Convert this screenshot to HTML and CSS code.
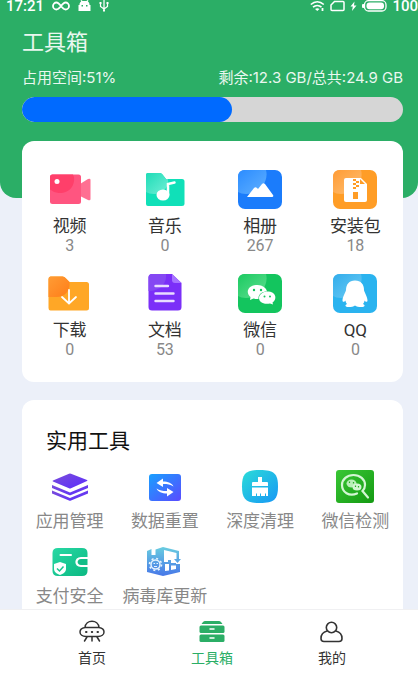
FILE: index.html
```html
<!DOCTYPE html>
<html lang="zh-CN">
<head>
    <meta charset="UTF-8">
    <meta name="viewport" content="width=device-width, initial-scale=1.0">
    <title>工具箱</title>
    <link rel="stylesheet" href="styles.css">
</head>
<body>
    <div class="app">
        <main class="content">
            <header class="header">
                <div class="status-bar">
                    <div class="status-left">
                        <span>17:21</span>
                        <svg width="18" height="12" viewBox="0 0 18 12" fill="none" stroke="#fff" stroke-width="1.8">
                            <path d="M9 6C7 3.500 6 2.500 4.500 2.500a3.500 3.500 0 0 0 0 7C6 9.500 7 8.500 9 6s3-3.500 4.500-3.500a3.500 3.500 0 0 1 0 7C12 9.500 11 8.500 9 6z"/>
                        </svg>
                        <svg width="13" height="12" viewBox="0 0 13 12" fill="#fff">
                            <path fill-rule="evenodd" d="M1.500 4.500c0-1.500.7-2.500 1.700-3L2.500.500 3.500 0l1 1h4l1-1 1 .5-.7 1c1 .5 1.700 1.500 1.700 3v.5h1v6H.5V5h1zM3.500 5v1.500H5V5zM8 5v1.500h1.500V5z"/>
                        </svg>
                        <svg width="10" height="12" viewBox="0 0 10 12" fill="none" stroke="#fff" stroke-width="1.200">
                            <path d="M5 0v11M1.500 3.500v3L5 9l3.500-2.500v-3"/>
                            <path d="M.5 3h2M7.500 3h2M4 10.500h2" stroke-width="2"/>
                        </svg>
                    </div>
                    <div class="status-right">
                        <svg width="15" height="12" viewBox="0 0 15 12" fill="none" stroke="#fff" stroke-width="1.600">
                            <path d="M.8 4.500c4-3.500 9-3.500 13 0M3 7.200c2.500-2.200 6-2.200 8.500 0"/>
                            <path d="M5 9c1.500-1 3-1 4.500 0l-2.200 2z" fill="#fff" stroke="none"/>
                            <path d="M12.500 8v3" stroke-width="1.800"/>
                        </svg>
                        <svg width="15" height="12" viewBox="0 0 15 12" fill="none" stroke="#fff" stroke-width="1.500">
                            <path d="M4.500 1.500H13q1 0 1 1v7q0 1-1 1H2q-1 0-1-1V5z"/>
                        </svg>
                        <svg width="7" height="12" viewBox="0 0 7 12" fill="#fff">
                            <path d="M4.500 1.500L.5 6.500h2.300L2 11l4.500-5.500H4z"/>
                        </svg>
                        <svg width="25" height="12" viewBox="0 0 25 12">
                            <rect x="2.500" y=".7" width="21.500" height="10.300" rx="4" fill="none" stroke="#fff" stroke-width="1.300"/>
                            <rect x="4.500" y="2.500" width="17.500" height="6.700" rx="3" fill="#fff"/>
                            <rect x="0" y="4" width="2.500" height="4" rx="1" fill="#fff"/>
                        </svg>
                        <span>100</span>
                    </div>
                </div>
                <h1 class="page-title">工具箱</h1>
                <div class="storage-text">
                    <span>占用空间:51%</span>
                    <span>剩余:12.3 GB/总共:24.9 GB</span>
                </div>
                <div class="storage-bar">
                    <div class="storage-used" style="width: 55%"></div>
                </div>
            </header>

            <section class="card files">
                <a class="item" href="#">
                    <svg width="44" height="40" viewBox="0 0 44 40">
                        <path d="M32 15l8-5q2.500-1 2.500 1v19q0 2-2.500 1l-8-4z" fill="#ff6f92"/>
                        <rect x="2" y="5.500" width="31" height="29.500" rx="2.500" fill="#ff5580"/>
                        <path d="M4.500 5.500h20.500q2 4 .5 9c-2 7-9 10-15 9.500q-5-.5-8.500-3.500V8q0-2.500 2.500-2.500z" fill="#ff3f6a"/>
                        <circle cx="9" cy="12.500" r="2.500" fill="#fff"/>
                    </svg>
                    <span class="item-name">视频</span>
                    <span class="item-count">3</span>
                </a>
                <a class="item" href="#">
                    <svg width="44" height="40" viewBox="0 0 44 40">
                        <defs>
                            <linearGradient id="musicShine" x1="0" y1="0" x2="1" y2="1">
                                <stop offset="0" stop-color="#1fdcb7"/>
                                <stop offset="1" stop-color="#70efd6"/>
                            </linearGradient>
                        </defs>
                        <path d="M5 4h12q1.500 0 2.500 1.500L23 10h16q2.500 0 2.500 2.500V35q0 2-2.500 2H5q-2 0-2-2V6q0-2 2-2z" fill="#10e0b8"/>
                        <path d="M5 4h12q1.500 0 2.500 1.500L23 10h2c1 7-4 15-14 15q-5 0-8-2V6q0-2 2-2z" fill="url(#musicShine)"/>
                        <ellipse cx="20" cy="26" rx="6.500" ry="5.500" fill="#fff"/>
                        <path d="M25 26V15l6.500-1.500" fill="none" stroke="#fff" stroke-width="2.500" stroke-linecap="round"/>
                    </svg>
                    <span class="item-name">音乐</span>
                    <span class="item-count">0</span>
                </a>
                <a class="item" href="#">
                    <svg width="44" height="40" viewBox="0 0 44 40">
                        <defs>
                            <linearGradient id="albumShine" x1="0" y1="0" x2="1" y2="1">
                                <stop offset="0" stop-color="#2b8cff"/>
                                <stop offset="1" stop-color="#60b0ff"/>
                            </linearGradient>
                        </defs>
                        <rect x="0" y="1" width="44" height="39" rx="7" fill="#1b7cfb"/>
                        <path d="M7 1h21c3 11-6 24-20 24q-5 0-8-2V8q0-7 7-7z" fill="url(#albumShine)"/>
                        <path d="M9 28l7-9q1.500-1.500 3 0l1 1 4-5q1.500-1.500 3 0l8 11q1 2-1 2z" fill="#fff"/>
                    </svg>
                    <span class="item-name">相册</span>
                    <span class="item-count">267</span>
                </a>
                <a class="item" href="#">
                    <svg width="44" height="40" viewBox="0 0 44 40">
                        <defs>
                            <linearGradient id="zipShine" x1="0" y1="0" x2="1" y2="1">
                                <stop offset="0" stop-color="#ff9b34"/>
                                <stop offset="1" stop-color="#ffc074"/>
                            </linearGradient>
                        </defs>
                        <rect x="0" y="1" width="44" height="39" rx="7" fill="#ff9d26"/>
                        <path d="M7 1h21c3 11-6 24-20 24q-5 0-8-2V8q0-7 7-7z" fill="url(#zipShine)"/>
                        <path d="M13 9h15l6 6v16q0 2-2 2H13q-2 0-2-2V11q0-2 2-2z" fill="#fff"/>
                        <path d="M20 10h3v2h-3zM23 12h3v2h-3zM20 14h3v2h-3zM23 16h3v2h-3zM20 18h3v2h-3zM20 23h5v7h-5zM27 10v5h5z" fill="#ff9d26"/>
                    </svg>
                    <span class="item-name">安装包</span>
                    <span class="item-count">18</span>
                </a>
                <a class="item" href="#">
                    <svg width="44" height="40" viewBox="0 0 44 40">
                        <defs>
                            <linearGradient id="downShine" x1="0" y1="0" x2="1" y2="1">
                                <stop offset="0" stop-color="#ff9c35"/>
                                <stop offset="1" stop-color="#ff7d18"/>
                            </linearGradient>
                        </defs>
                        <path d="M2.500 3.500h12q2 0 3 1.500l4 4h17q2.500 0 2.500 2.500V35q0 2.500-2.500 2.500h-36Q.5 37.500.5 35V6q0-2.500 2-2.500z" fill="#ffa726"/>
                        <path d="M2.500 3.500h12q2 0 3 1.500l4 4c1 9-5 15-13 15H.5V6q0-2.500 2-2.500z" fill="url(#downShine)"/>
                        <path d="M21 17v13M14 24l7 6.500 7-6.500" fill="none" stroke="#fff" stroke-width="1.800" stroke-linecap="round"/>
                    </svg>
                    <span class="item-name">下载</span>
                    <span class="item-count">0</span>
                </a>
                <a class="item" href="#">
                    <svg width="44" height="40" viewBox="0 0 44 40">
                        <path d="M9 1h20l9.500 9v24q0 3.500-3.500 3.500H9q-3.500 0-3.500-3.500V4.500Q5.500 1 9 1z" fill="#7b2ff8"/>
                        <path d="M9 1h14c1 9-5 17-17.500 17V4.500Q5.500 1 9 1z" fill="#8548f3"/>
                        <path d="M29 1v6q0 3 3 3h6.500z" fill="#a673ff"/>
                        <path d="M12.500 13H25M12.500 20.500h18M12.500 28h18" stroke="#e9dcff" stroke-width="2.400" stroke-linecap="round"/>
                    </svg>
                    <span class="item-name">文档</span>
                    <span class="item-count">53</span>
                </a>
                <a class="item" href="#">
                    <svg width="44" height="40" viewBox="0 0 44 40">
                        <defs>
                            <linearGradient id="chatShine" x1="0" y1="0" x2="1" y2="1">
                                <stop offset="0" stop-color="#1bca61"/>
                                <stop offset="1" stop-color="#60df91"/>
                            </linearGradient>
                        </defs>
                        <rect x="0" y="1" width="44" height="39" rx="7" fill="#13c55e"/>
                        <path d="M7 1h21c3 11-6 24-20 24q-5 0-8-2V8q0-7 7-7z" fill="url(#chatShine)"/>
                        <path d="M19.500 12c5 0 9 3 9.500 6.500-5 0-9 3-8.500 7.500-2 .3-3.500 0-5-.5L12 27l.5-3C7 19.500 10 12 19.500 12z" fill="#fff"/>
                        <path d="M29 18.500c10 0 10 8.500 5.500 11l.5 2-3-1c-7 1.500-11-2-11-5.500s4-6.500 8-6.500z" fill="#fff"/>
                        <g fill="#13c55e">
                            <circle cx="16" cy="17" r="1.200"/>
                            <circle cx="23" cy="17" r="1.200"/>
                            <circle cx="26.500" cy="23.500" r="1"/>
                            <circle cx="32" cy="23.500" r="1"/>
                        </g>
                    </svg>
                    <span class="item-name">微信</span>
                    <span class="item-count">0</span>
                </a>
                <a class="item" href="#">
                    <svg width="44" height="40" viewBox="0 0 44 40">
                        <defs>
                            <linearGradient id="qqShine" x1="0" y1="0" x2="1" y2="1">
                                <stop offset="0" stop-color="#32adeb"/>
                                <stop offset="1" stop-color="#6bcbf5"/>
                            </linearGradient>
                        </defs>
                        <rect x="0" y="1" width="44" height="39" rx="7" fill="#2ab3ef"/>
                        <path d="M7 1h21c3 11-6 24-20 24q-5 0-8-2V8q0-7 7-7z" fill="url(#qqShine)"/>
                        <path d="M22 7.500c6 0 9 4 9 9.500 0 1.500 3.500 7 3.500 10.500 0 2-2 1.500-3 0 0 1.500-.8 2.500-1.500 3.500 2.500 1 2 3-1.500 3-3 0-5-.5-6.500-1.500-1.500 1-3.500 1.500-6.500 1.500-3.500 0-4-2-1.500-3-.7-1-1.500-2-1.500-3.500-1 1.500-3 2-3 0C9.500 24 13 18.500 13 17c0-5.500 3-9.500 9-9.500z" fill="#fff"/>
                    </svg>
                    <span class="item-name">QQ</span>
                    <span class="item-count">0</span>
                </a>
            </section>

            <section class="card tools">
                <h2 class="card-title">实用工具</h2>
                <div class="tool-grid">
                    <a class="tool" href="#">
                        <svg width="44" height="36" viewBox="0 0 44 36">
                            <defs>
                                <linearGradient id="layers" x1="0" y1="0" x2="1" y2="1">
                                    <stop offset="0" stop-color="#7a4dd8"/>
                                    <stop offset="1" stop-color="#5b2dff"/>
                                </linearGradient>
                            </defs>
                            <g fill="url(#layers)">
                                <path d="M21 4.800q1-.5 2 0L39 11q1 .5 0 1L23 19.200q-1 .5-2 0L5 12.500q-1-.5 0-1z"/>
                                <path d="M4 16l18 7.500L40 16v3L23 26q-1 .5-2 0L4 19z"/>
                                <path d="M4 21.500L22 29l18-7.500v3L23 31.500q-1 .5-2 0L4 24.500z"/>
                            </g>
                        </svg>
                        <span class="tool-name">应用管理</span>
                    </a>
                    <a class="tool" href="#">
                        <svg width="44" height="36" viewBox="0 0 44 36">
                            <defs>
                                <linearGradient id="reset" x1="0" y1="0" x2="1" y2="1">
                                    <stop offset="0" stop-color="#18a0ff"/>
                                    <stop offset="1" stop-color="#5a4bff"/>
                                </linearGradient>
                            </defs>
                            <rect x="6" y="5" width="32" height="27" rx="3" fill="url(#reset)"/>
                            <path d="M13.500 14l6.500-4.500v3c5 0 9 1.500 10.500 5-3-2-6-2.500-10.500-2.500v3z" fill="#fff"/>
                            <path d="M30.500 23L24 27.500v-3c-5 0-9-1.500-10.500-5 3 2 6 2.500 10.500 2.500v-3z" fill="#fff"/>
                        </svg>
                        <span class="tool-name">数据重置</span>
                    </a>
                    <a class="tool" href="#">
                        <svg width="44" height="36" viewBox="0 0 44 36">
                            <defs>
                                <linearGradient id="clean" x1="0" y1="0" x2="1" y2="1">
                                    <stop offset="0" stop-color="#2bdcd8"/>
                                    <stop offset="1" stop-color="#1797f5"/>
                                </linearGradient>
                            </defs>
                            <path d="M22 1c14 0 18 3.500 18 16.500S36 34 22 34 4 30.500 4 17.500 8 1 22 1z" fill="url(#clean)"/>
                            <path d="M20 8h4v5h5q1 0 1 1v3H14v-3q0-1 1-1h5zM14 18.500h16V27h-2v-2.500h-1V27h-4v-2.500h-1V27h-3v-2.500h-1V27h-4z" fill="#fff"/>
                        </svg>
                        <span class="tool-name">深度清理</span>
                    </a>
                    <a class="tool" href="#">
                        <svg width="44" height="36" viewBox="0 0 44 36">
                            <defs>
                                <linearGradient id="detect" x1="0" y1="0" x2="1" y2="1">
                                    <stop offset="0" stop-color="#39c735"/>
                                    <stop offset="1" stop-color="#149a12"/>
                                </linearGradient>
                            </defs>
                            <rect x="3" y="1" width="38" height="33" rx="3" fill="url(#detect)"/>
                            <path d="M24 24.500c-8 3.500-15-1.500-15-8.500 0-5.500 5-10 11.500-10S32 10.500 32 16c0 2.500-1 4.500-2.500 6l5.500 6.500" fill="none" stroke="#d3f6d3" stroke-width="2.200" stroke-linecap="round"/>
                            <ellipse cx="18.500" cy="14.500" rx="5" ry="4" fill="#b8efb8"/>
                            <ellipse cx="24" cy="18" rx="4.500" ry="3.500" fill="#d3f6d3"/>
                            <path d="M16.500 12.500v1.500M20.500 13v1.500M22.500 16.500V18M25.500 17v1.500" stroke="#28ad26" stroke-width="1.200"/>
                        </svg>
                        <span class="tool-name">微信检测</span>
                    </a>
                    <a class="tool" href="#">
                        <svg width="44" height="36" viewBox="0 0 44 36">
                            <defs>
                                <linearGradient id="pay" x1="0" y1="0" x2="1" y2="1">
                                    <stop offset="0" stop-color="#28d8a4"/>
                                    <stop offset="1" stop-color="#0cb982"/>
                                </linearGradient>
                            </defs>
                            <path d="M10 4h24q5.500 0 5.500 5v4H33c-7.500 0-7.500 10 0 10h6.500v4q0 5-5.500 5H10q-5.500 0-5.500-5V9q0-5 5.500-5z" fill="url(#pay)"/>
                            <path d="M39.500 15H33c-4.500 0-4.500 6 0 6h6.500z" fill="#12bd87"/>
                            <path d="M12.500 11H23" stroke="#fff" stroke-width="2" stroke-linecap="round"/>
                            <path d="M12 18l6 2v5c0 3-3 5-6 6-3-1-6-3-6-6v-5z" fill="#fff"/>
                            <path d="M9 24.500l2.500 2.500 4-4.500" fill="none" stroke="#18c690" stroke-width="1.500"/>
                        </svg>
                        <span class="tool-name">支付安全</span>
                    </a>
                    <a class="tool" href="#">
                        <svg width="44" height="36" viewBox="0 0 44 36">
                            <defs>
                                <linearGradient id="virus" x1="0" y1="0" x2="0" y2="1">
                                    <stop offset="0" stop-color="#69cde0"/>
                                    <stop offset="1" stop-color="#4777e8"/>
                                </linearGradient>
                            </defs>
                            <path fill-rule="evenodd" d="M4 7l4.500-2v6h4V5.500L20 3l16 4v8h2l-3.500 4-3.500-4h2.500V9L21 6v12h4v-2h3v3h5v1h4v8l-17 4L4 28zM22 20v7l4-.5V20zM28 21.500V26l5-1v-3.500z" fill="url(#virus)"/>
                            <circle cx="12.500" cy="20.500" r="4.500" fill="none" stroke="#e5f3ff" stroke-width="1.500"/>
                            <circle cx="12.500" cy="20.500" r="6" fill="none" stroke="#e5f3ff" stroke-width="1.600" stroke-dasharray="2 2.700"/>
                            <path d="M10.500 19.500H12M13.500 19.500H15M11 22.500h3" stroke="#e5f3ff"/>
                        </svg>
                        <span class="tool-name">病毒库更新</span>
                    </a>
                </div>
            </section>
        </main>

        <nav class="tab-bar">
            <a class="tab" href="#">
                <svg width="28" height="24" viewBox="0 0 28 24" fill="none" stroke="#333" stroke-width="1.500" stroke-linecap="round">
                    <path d="M7 8.500c.5-8.500 13.500-8.500 14 0M7 8.500h14c3 .5 5 2 5 4.500s-2.500 4.500-6 4.500H8c-3.500 0-6-2-6-4.500s2-4 5-4.500zM9 18l-2.500 4M14 18v4M19 18l2.500 4"/>
                    <path d="M8 13h.5M13.800 13h.4M19.500 13h.5" stroke-width="2"/>
                </svg>
                <span>首页</span>
            </a>
            <a class="tab active" href="#">
                <svg width="28" height="24" viewBox="0 0 28 24" fill="#2bae66">
                    <path d="M7 2h14q1 0 2 1l1.500 2h-21L5 3q1-1 2-1z"/>
                    <rect x="1.500" y="6.500" width="25" height="7.500" rx="1.500"/>
                    <rect x="1.500" y="15.500" width="25" height="7.500" rx="1.500"/>
                    <path d="M12 10h4M12 19h4" stroke="#fff" stroke-width="1.500" stroke-linecap="round"/>
                </svg>
                <span>工具箱</span>
            </a>
            <a class="tab" href="#">
                <svg width="28" height="24" viewBox="0 0 28 24" fill="none" stroke="#333" stroke-width="1.600">
                    <circle cx="13.500" cy="8.500" r="5.200"/>
                    <path d="M9 12c-4 1-6 4-6 7.500Q3 22.500 6 22.500h15q3 0 3-3c0-3.500-2-6.500-6-7.500"/>
                </svg>
                <span>我的</span>
            </a>
        </nav>
    </div>
</body>
</html>
```

FILE: styles.css
```css
* {
    box-sizing: border-box;
}
body {
    margin: 0;
    font-family: Roboto, "Noto Sans CJK SC", sans-serif;
    background-color: #ecf0f9;
}
a {
    color: inherit;
    text-decoration: none;
}
svg {
    display: block;
    flex-shrink: 0;
}
.app {
    display: flex;
    flex-direction: column;
    height: 100vh;
}
.content {
    flex: 1;
    min-height: 0;
    overflow-x: hidden;
    overflow-y: auto;
    scrollbar-width: none;
}

/* header */
.header {
    padding: 0 15px 76px 22px;
    background-color: #2bae66;
    border-radius: 0 0 16px 16px;
    color: #e9f7ef;
}
.status-bar {
    display: flex;
    justify-content: space-between;
    height: 12px;
    margin: 0 -15px 0 -16px;
    font-size: 15px;
    font-weight: 500;
    line-height: 12px;
    color: #fff;
}
.status-left,
.status-right {
    display: flex;
    align-items: center;
}
.status-left {
    gap: 8px;
}
.status-right {
    gap: 5px;
}
.page-title {
    margin: 16px 0 10px;
    font-size: 22px;
    font-weight: 400;
    line-height: 30px;
}
.storage-text {
    display: flex;
    justify-content: space-between;
    font-family: Inter, "Noto Sans CJK SC", sans-serif;
    font-size: 15px;
    line-height: 20px;
}
.storage-bar {
    height: 25px;
    margin-top: 9px;
    border-radius: 13px;
    background-color: #d6d6d6;
    overflow: hidden;
}
.storage-used {
    height: 100%;
    border-radius: 13px;
    background-color: #006aff;
}

/* cards */
.card {
    margin: 0 15px 18px 22px;
    border-radius: 12px;
    background-color: #fff;
}
.files {
    position: relative;
    display: grid;
    grid-template-columns: repeat(4, 1fr);
    row-gap: 17px;
    margin-top: -57px;
    padding: 28px 0 22px;
}
.item,
.tool {
    display: flex;
    flex-direction: column;
    align-items: center;
    line-height: 20px;
    white-space: nowrap;
}
.item-name {
    margin-top: 7px;
    font-size: 17px;
    color: #333;
}
.item-count {
    font-size: 16px;
    color: #888;
}
.tools {
    padding: 26px 0 20px;
}
.card-title {
    margin: 0 24px 13px;
    font-size: 21px;
    font-weight: 400;
    line-height: 30px;
    color: #111;
}
.tool-grid {
    display: grid;
    grid-template-columns: repeat(4, 1fr);
    row-gap: 13px;
}
.tool-name {
    margin-top: 6px;
    font-size: 17px;
    color: #888;
}

/* bottom tabs */
.tab-bar {
    display: grid;
    grid-template-columns: repeat(3, 1fr);
    padding: 9px 26px 5px 32px;
    border-top: 1px solid #f0f0f2;
    background-color: #fff;
}
.tab {
    display: flex;
    flex-direction: column;
    align-items: center;
    gap: 5px;
    font-size: 14px;
    line-height: 20px;
    color: #333;
}
.tab.active {
    color: #2bae66;
}
```
